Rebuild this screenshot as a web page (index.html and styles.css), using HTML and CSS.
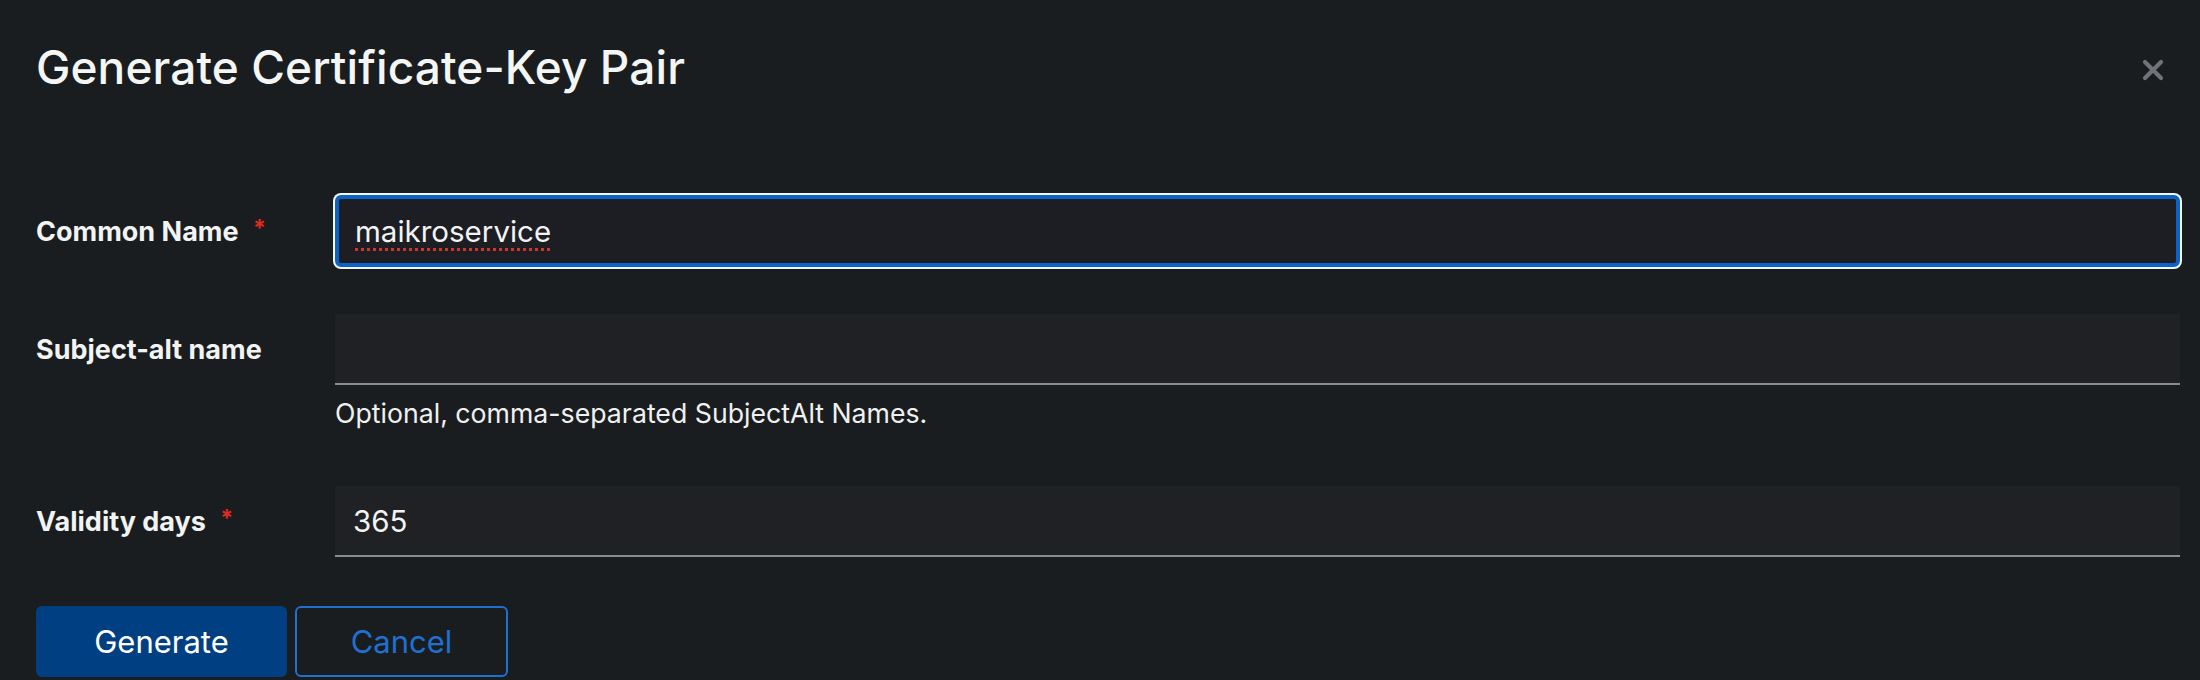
FILE: index.html
```html
<!DOCTYPE html>
<html lang="en">
<head>
<meta charset="utf-8">
<title>Generate Certificate-Key Pair</title>
<link rel="stylesheet" href="styles.css">
</head>
<body>
<div class="modal">
  <header class="modal-header">
    <h1 class="modal-title">Generate Certificate-Key Pair</h1>
    <button class="close" aria-label="Close">
      <svg width="22" height="22" viewBox="0 0 22 22" aria-hidden="true">
        <path d="M3 3 L19 19 M19 3 L3 19" stroke="currentColor" stroke-width="4.2" stroke-linecap="round"/>
      </svg>
    </button>
  </header>
  <form class="form">
    <div class="row row-1">
      <label class="label">Common Name <span class="req">*</span></label>
      <div class="control">
        <div class="input focused"><span class="value spell">maikroservice</span></div>
      </div>
    </div>
    <div class="row row-2">
      <label class="label">Subject-alt name</label>
      <div class="control">
        <div class="input"></div>
      </div>
    </div>
    <div class="row-helper">
      <div></div>
      <div class="helper">Optional, comma-separated SubjectAlt Names.</div>
    </div>
    <div class="row row-3">
      <label class="label">Validity days <span class="req">*</span></label>
      <div class="control">
        <div class="input"><span class="value">365</span></div>
      </div>
    </div>
    <div class="actions">
      <button type="button" class="btn btn-primary">Generate</button>
      <button type="button" class="btn btn-secondary">Cancel</button>
    </div>
  </form>
</div>
</body>
</html>
```

FILE: styles.css
```css
* { box-sizing: border-box; }
html, body { margin: 0; padding: 0; }
body {
  background: #1a1d1f;
  color: #f0f0f0;
  font-family: "Inter", "Noto Sans", sans-serif;
  width: 2200px;
  height: 680px;
  overflow: hidden;
}
.modal {
  padding: 0 20px 0 36px;
}
.modal-header {
  display: flex;
  justify-content: space-between;
  align-items: flex-start;
  padding-top: 39px;
  padding-right: 16px;
}
.modal-title {
  margin: 0;
  font-size: 46px;
  font-weight: 500;
  line-height: 56px;
  color: #f4f5f5;
  letter-spacing: 0.1px;
}
.close {
  background: none;
  border: 0;
  padding: 0;
  margin-top: 20px;
  color: #707377;
  width: 22px;
  height: 22px;
  display: block;
}
.close svg { display: block; }
.form {
  margin-top: 100px;
}
.row, .row-helper {
  display: grid;
  grid-template-columns: 299px 1fr;
  align-items: center;
}
.row-2 { margin-top: 47px; }
.row-3 { margin-top: 53px; }
.label {
  font-size: 27px;
  font-weight: 700;
  color: #f2f3f3;
}
.req {
  color: #e3291d;
  margin-left: 8px;
  font-weight: 700;
  font-size: 23px;
  position: relative;
  top: -5px;
}
.input {
  height: 71px;
  background: #1f2124;
  border-bottom: 2px solid #8a8d90;
  display: flex;
  align-items: center;
  padding: 0 18px;
}
.input.focused {
  height: 72px;
  background: #1c1e23;
  border: 4px solid #0b63c8;
  border-radius: 6px;
  box-shadow: 0 0 0 2px #f4f6f8;
  padding: 0 16px;
}
.value {
  font-size: 29.5px;
  color: #f3f3f3;
}
.spell {
  text-decoration: underline dotted #d0362c;
  text-decoration-thickness: 3px;
  text-underline-offset: 6px;
}
.helper {
  margin-top: 8px;
  font-size: 26.7px;
  line-height: 40px;
  color: #f0f0f0;
}
.actions {
  display: flex;
  gap: 8px;
  margin-top: 49px;
}
.btn {
  height: 71px;
  border-radius: 6px;
  font-family: inherit;
  font-size: 31px;
  font-weight: 400;
  padding: 0;
  cursor: pointer;
}
.btn-primary {
  width: 251px;
  background: #003f82;
  color: #ffffff;
  border: 0;
}
.btn-secondary {
  width: 213px;
  background: transparent;
  color: #1f70d1;
  border: 2px solid #1f70d1;
}
```
